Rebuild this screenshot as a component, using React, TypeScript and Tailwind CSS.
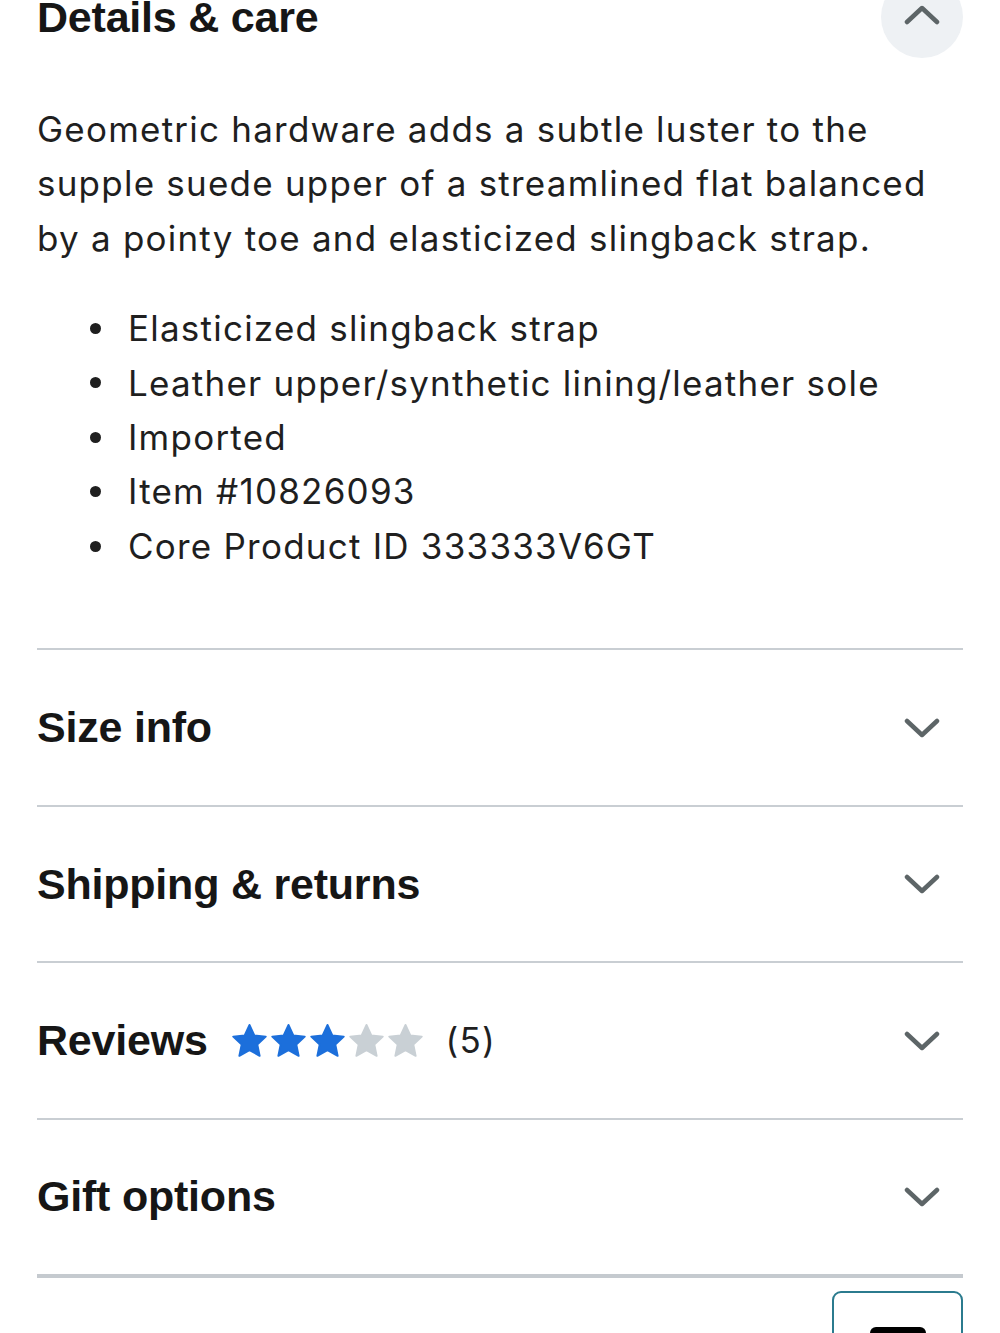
import React from "react";

const Chevron = ({ up = false }: { up?: boolean }) => (
  <svg width="36" height="20" viewBox="0 0 36 20" fill="none" className="block">
    <path
      d={up ? "M3 17 L18 3 L33 17" : "M3 3 L18 17 L33 3"}
      stroke="#5d6567"
      strokeWidth="4.5"
      strokeLinecap="round"
      strokeLinejoin="round"
    />
  </svg>
);

const Star = ({ filled }: { filled: boolean }) => (
  <svg width="39" height="36" viewBox="0 0 24 23" className="block">
    <path
      d="M12 1.2 L15.1 7.9 L22.4 8.7 L17 13.7 L18.5 21 L12 17.3 L5.5 21 L7 13.7 L1.6 8.7 L8.9 7.9 Z"
      fill={filled ? "#1c6fdb" : "#c9d0d5"}
      stroke={filled ? "#1c6fdb" : "#c9d0d5"}
      strokeWidth="1.2"
      strokeLinejoin="round"
    />
  </svg>
);

const headingCls =
  "font-['Liberation_Sans',Arial,sans-serif] font-bold text-[43px] leading-none text-[#161616] tracking-[-0.005em]";
const bodyCls =
  "font-['Inter','Noto_Sans',sans-serif] text-[35px] leading-[54.4px] tracking-[0.035em] text-[#1f1f1f]";

const Row = ({ children, last = false }: { children: React.ReactNode; last?: boolean }) => (
  <div
    className={`flex items-center justify-between ${
      last ? "h-[158px] border-b-[4px] border-[#c5cacf]" : "h-[156.5px] border-b-2 border-[#c9ced3]"
    }`}
  >
    <div className="flex items-center">{children}</div>
    <div className="mr-[23px]">
      <Chevron />
    </div>
  </div>
);

const items = [
  "Elasticized slingback strap",
  "Leather upper/synthetic lining/leather sole",
  "Imported",
  "Item #10826093",
  "Core Product ID 333333V6GT",
];

export default function App() {
  return (
    <div className="w-[1000px] h-[1333px] overflow-hidden bg-white">
      <div className="mx-[37px] -mt-[24px]">
        <div className="flex h-[82px] items-center justify-between">
          <h2 className={headingCls}>Details &amp; care</h2>
          <div className="flex h-[82px] w-[82px] items-center justify-center rounded-full bg-[#eef1f4]">
            <div className="-mt-[4px]">
              <Chevron up />
            </div>
          </div>
        </div>

        <p className={`${bodyCls} mt-[44px] whitespace-nowrap`}>
          Geometric hardware adds a subtle luster to the
          <br />
          supple suede upper of a streamlined flat balanced
          <br />
          by a pointy toe and elasticized slingback strap.
        </p>

        <ul className={`${bodyCls} mt-[36px] pl-[53px]`}>
          {items.map((t) => (
            <li key={t} className="flex items-center">
              <span className="mr-[27px] h-[11px] w-[11px] shrink-0 rounded-full bg-[#1f1f1f]" />
              <span>{t}</span>
            </li>
          ))}
        </ul>

        <div className="mt-[75px] border-b-2 border-[#c9ced3]" />

        <Row>
          <h2 className={headingCls}>Size info</h2>
        </Row>
        <Row>
          <h2 className={headingCls}>Shipping &amp; returns</h2>
        </Row>
        <Row>
          <h2 className={headingCls}>Reviews</h2>
          <div className="ml-[22px] flex items-center">
            <Star filled />
            <Star filled />
            <Star filled />
            <Star filled={false} />
            <Star filled={false} />
          </div>
          <span className={`${bodyCls} ml-[21px]`}>(5)</span>
        </Row>
        <Row last>
          <h2 className={headingCls}>Gift options</h2>
        </Row>

        <div className="mt-[13px] flex justify-end">
          <div className="flex h-[80px] w-[131px] justify-center rounded-[9px] border-2 border-[#2b7b8e] pt-[34px]">
            <div className="h-[30px] w-[56px] rounded-[6px] bg-black" />
          </div>
        </div>
      </div>
    </div>
  );
}
